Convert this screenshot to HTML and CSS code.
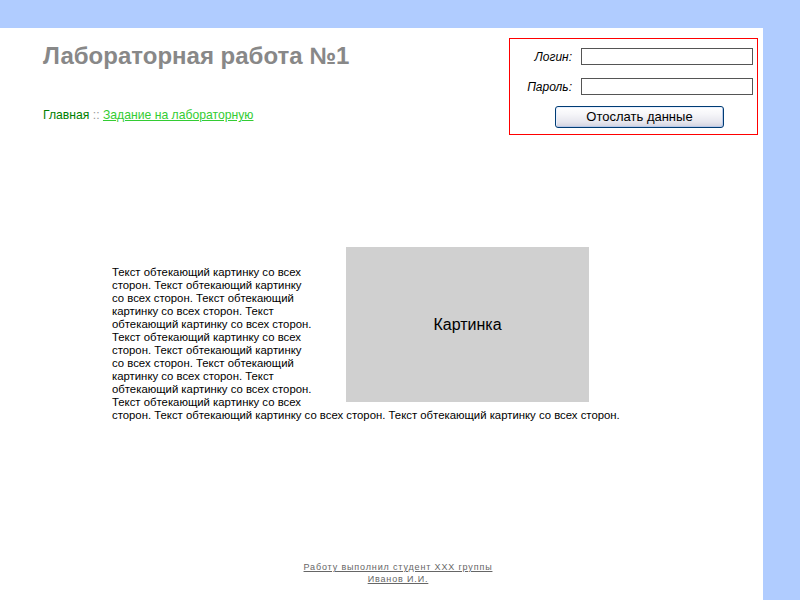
FILE: index.html
```html
<!DOCTYPE html>
<html lang="ru">
<head>
<meta charset="utf-8">
<title>Лабораторная работа №1</title>
<link rel="stylesheet" href="styles.css">
</head>
<body>
<div class="page">
  <header class="header">
    <div class="header-left">
      <h1 class="title">Лабораторная работа №1</h1>
      <nav class="crumbs"><span class="crumb-home">Главная</span> <span class="crumb-sep">::</span> <a class="crumb-link" href="#">Задание на лабораторную</a></nav>
    </div>
    <form class="login">
      <label class="login-label" for="login">Логин:</label>
      <input class="login-input" id="login" type="text">
      <label class="login-label" for="pass">Пароль:</label>
      <input class="login-input" id="pass" type="password">
      <button class="login-btn" type="button">Отослать данные</button>
    </form>
  </header>
  <main class="content">
    <div class="picture">Картинка</div>
    <p class="flow-text">Текст обтекающий картинку со всех сторон. Текст обтекающий картинку со всех сторон. Текст обтекающий картинку со всех сторон. Текст обтекающий картинку со всех сторон. Текст обтекающий картинку со всех сторон. Текст обтекающий картинку со всех сторон. Текст обтекающий картинку со всех сторон. Текст обтекающий картинку со всех сторон. Текст обтекающий картинку со всех сторон. Текст обтекающий картинку со всех сторон. Текст обтекающий картинку со всех сторон.</p>
  </main>
  <footer class="footer">
    <a class="footer-link" href="#">Работу выполнил студент XXX группы</a><br>
    <a class="footer-link" href="#">Иванов И.И.</a>
  </footer>
</div>
</body>
</html>
```
FILE: styles.css
```css
html, body {
  margin: 0;
  padding: 0;
}
body {
  background: #b0ccff;
  font-family: "Liberation Sans", Arial, sans-serif;
  padding-top: 28px;
  height: 600px;
  box-sizing: border-box;
  overflow: hidden;
}
.page {
  background: #ffffff;
  width: 763px;
  height: 572px;
  display: flex;
  flex-direction: column;
}
.header {
  display: flex;
  justify-content: space-between;
  align-items: flex-start;
}
.header-left {
  padding-left: 43px;
  padding-top: 14px;
}
.title {
  margin: 0;
  font-size: 24px;
  font-weight: bold;
  color: #888888;
  line-height: 28px;
}
.crumbs {
  margin-top: 38px;
  font-size: 12.2px;
  line-height: 14px;
}
.crumb-home {
  color: #008000;
}
.crumb-sep {
  color: #999999;
}
.crumb-link {
  color: #33cc33;
  text-decoration: underline;
}
.login {
  margin: 10px 5px 0 0;
  border: 1px solid #ff0000;
  padding: 9px 4px 6px 15px;
  display: grid;
  grid-template-columns: 47px 172px;
  column-gap: 9px;
  row-gap: 13px;
  align-items: center;
}
.login-label {
  font-size: 12px;
  font-style: italic;
  text-align: right;
  color: #000000;
  white-space: nowrap;
  line-height: 14px;
}
.login-input {
  box-sizing: border-box;
  width: 172px;
  height: 17px;
  margin: 0;
  padding: 0 2px;
  border: 1px solid #555555;
  background: #ffffff;
  font-size: 11px;
}
.login-btn {
  grid-column: 1 / span 2;
  justify-self: start;
  margin: -2px 0 0 30px;
  width: 169px;
  height: 22px;
  box-sizing: border-box;
  border: 1px solid #003c74;
  border-radius: 3px;
  background: linear-gradient(to bottom, #ffffff 0%, #f6f6f9 35%, #e6e6ee 75%, #d2d2de 100%);
  box-shadow: inset 1px 1px 0 #e8f0ff, inset -1px -1px 0 #b8c8e8;
  font-family: "Liberation Sans", Arial, sans-serif;
  font-size: 13px;
  color: #000000;
  padding: 0;
  line-height: 18px;
}
.content {
  margin: 112px 0 0 112px;
  width: 540px;
  font-size: 11.35px;
  line-height: 13px;
  color: #000000;
}
.picture {
  float: right;
  width: 243px;
  height: 155px;
  margin: 0 63px 3px 30px;
  background: #d0d0d0;
  display: flex;
  align-items: center;
  justify-content: center;
  font-size: 16px;
  color: #000000;
}
.flow-text {
  margin: 0;
  padding-top: 19px;
}
.footer {
  margin-top: auto;
  padding: 0 0 15px 33px;
  text-align: center;
  font-size: 9px;
  line-height: 12px;
  letter-spacing: 0.85px;
}
.footer-link {
  color: #666666;
  text-decoration: underline;
}
```
